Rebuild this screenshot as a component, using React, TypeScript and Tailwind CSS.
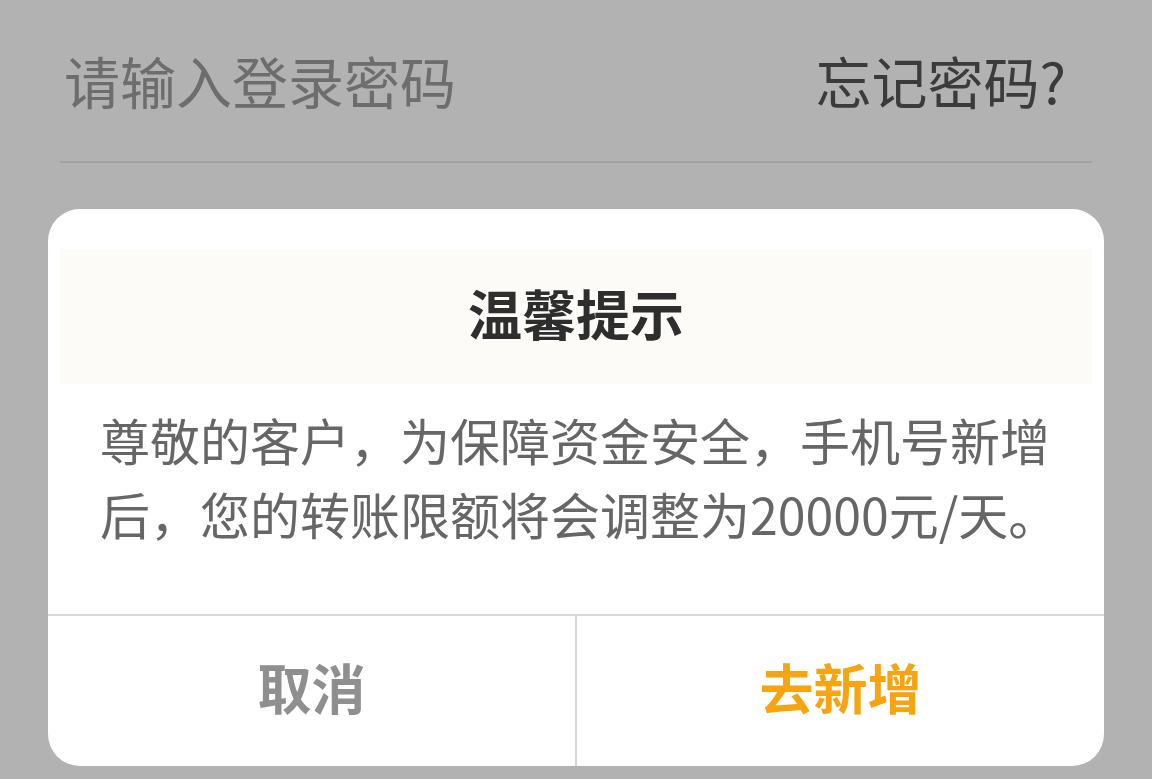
import React from 'react';

const cjk = { fontFamily: '"Noto Sans CJK SC", "Noto Sans", sans-serif' };

function LoginRow() {
  return (
    <div className="px-[60px]">
      <div className="flex h-[161px] items-center justify-between pb-[2px] pl-[4px] pr-[26px]">
        <span className="text-[56px] leading-none text-[#6d6d6d]">请输入登录密码</span>
        <span className="text-[56px] leading-none text-[#3b3b3b]">忘记密码?</span>
      </div>
      <div className="h-[2px] bg-[#a2a2a2]" />
    </div>
  );
}

function TipDialog() {
  return (
    <div className="mx-[48px] mt-[46px] overflow-hidden rounded-[32px] bg-white pt-[40px]">
      <div className="mx-[12px] flex h-[135px] items-center justify-center bg-[#fcfbf8] pb-[8px]">
        <h2 className="text-[54px] font-bold leading-none text-[#2e2e2e]">温馨提示</h2>
      </div>
      <div className="h-[230px] px-[52px] pt-[18px]">
        <p className="whitespace-nowrap text-[50px] leading-[74px] text-[#666666]">
          尊敬的客户，为保障资金安全，手机号新增
          <br />
          后，您的转账限额将会调整为20000元/天。
        </p>
      </div>
      <div className="flex h-[152px] border-t-2 border-[#d7d7d7]">
        <button className="flex flex-1 items-center justify-center pb-[10px] text-[54px] font-bold text-[#8f8f8f]">
          取消
        </button>
        <div className="w-[2px] bg-[#d7d7d7]" />
        <button className="flex flex-1 items-center justify-center pb-[10px] text-[54px] font-bold text-[#f6a412]">
          去新增
        </button>
      </div>
    </div>
  );
}

export default function App() {
  return (
    <div className="h-[779px] w-[1152px] overflow-hidden bg-[#b2b2b2]" style={cjk}>
      <LoginRow />
      <TipDialog />
    </div>
  );
}
